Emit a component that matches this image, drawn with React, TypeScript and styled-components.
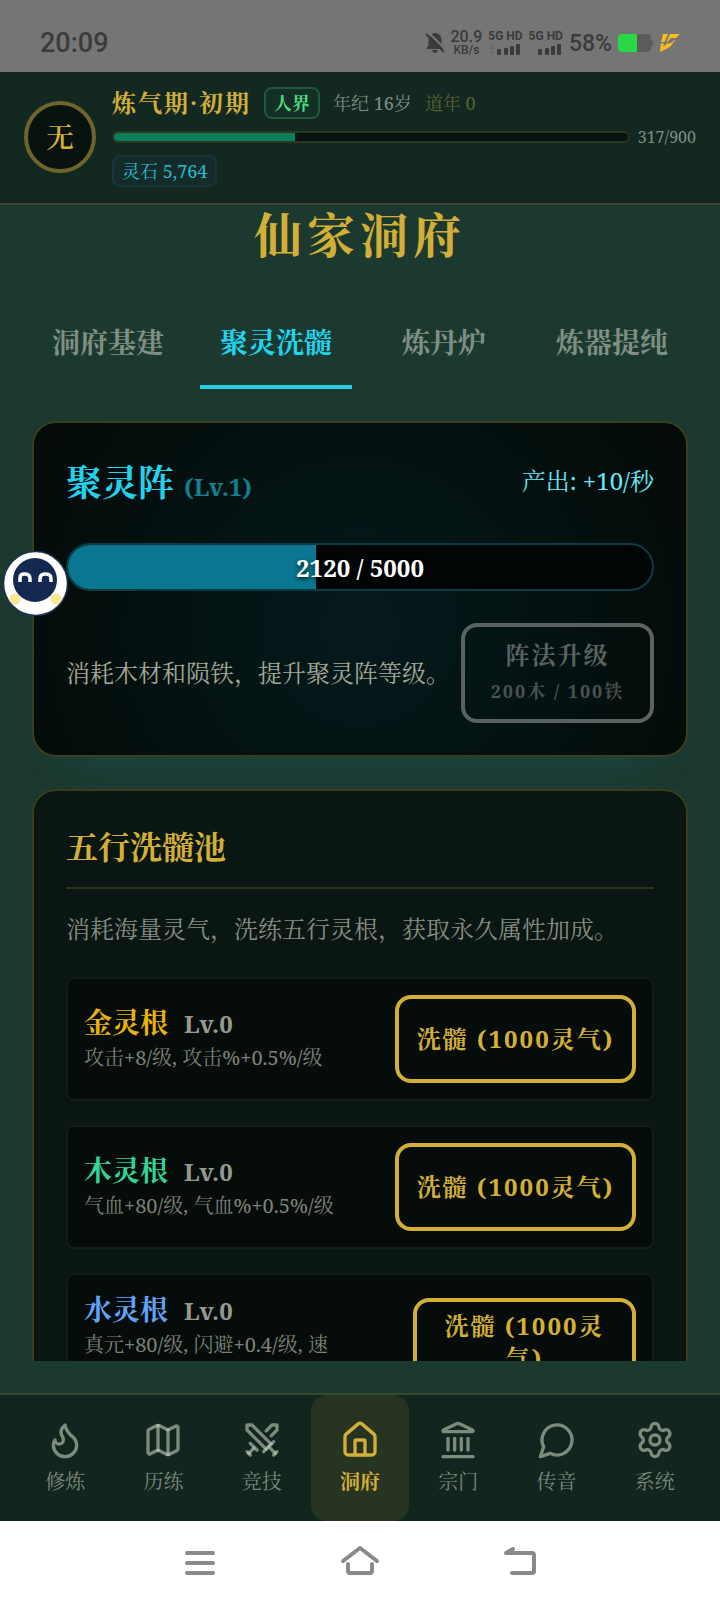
import React from 'react';
import styled, { createGlobalStyle } from 'styled-components';
import { House, Landmark, Map as MapIcon, Settings, Swords } from 'lucide-react';

const GOLD = '#d4af37';
const CYAN = '#22d3ee';
const MUTED = '#7f8f83';

const GlobalStyle = createGlobalStyle`
  * { box-sizing: border-box; }
  body {
    margin: 0;
    background: #1c392f;
    font-family: "Noto Serif", "Liberation Serif", "Noto Serif CJK SC", "Noto Sans CJK SC", serif;
  }
  h1, h2, h3, p { margin: 0; }
  button { font-family: inherit; padding: 0; border: 0; background: none; color: inherit; cursor: pointer; }
`;

const Screen = styled.div`
  display: flex;
  flex-direction: column;
  height: 100vh;
  overflow: hidden;
`;

/* ---------- status bar ---------- */

const StatusBar = styled.div`
  flex: none;
  display: flex;
  align-items: center;
  justify-content: space-between;
  height: 72px;
  padding: 14px 40px 0;
  background: #757575;
  color: #3b3b3b;
  font-family: Roboto, sans-serif;
  font-weight: 500;
`;

const Clock = styled.time`
  font-size: 27px;
`;

const StatusGroup = styled.div`
  display: flex;
  align-items: center;
  gap: 6px;
`;

const NetSpeed = styled.div`
  display: flex;
  flex-direction: column;
  align-items: center;
  font-size: 16px;
  line-height: 14px;
  small { font-size: 12px; line-height: 12px; }
`;

const Signal = styled.div`
  display: flex;
  flex-direction: column;
  align-items: center;
  gap: 2px;
  font-size: 12px;
  font-weight: 700;
  line-height: 11px;
  svg { display: block; }
`;

const Percent = styled.span`
  font-size: 23px;
`;

/* ---------- header ---------- */

const Header = styled.header`
  flex: none;
  display: flex;
  align-items: center;
  gap: 16px;
  padding: 15px 24px 16px;
  background: #132821;
  border-bottom: 2px solid #3b4729;
`;

const Avatar = styled.div`
  flex: none;
  display: grid;
  place-items: center;
  width: 72px;
  height: 72px;
  border: 4px solid #6f642b;
  border-radius: 50%;
  background: #08130f;
  color: ${GOLD};
  font-size: 28px;
  font-weight: 600;
  line-height: 40px;
`;

const Profile = styled.div`
  flex: 1;
  min-width: 0;
  display: flex;
  flex-direction: column;
  align-items: flex-start;
  gap: 8px;
`;

const ProfileRow = styled.div<{ $gap: number; $height: number }>`
  display: flex;
  align-items: center;
  align-self: stretch;
  gap: ${(p) => p.$gap}px;
  height: ${(p) => p.$height}px;
`;

const Realm = styled.h2`
  color: ${GOLD};
  font-size: 24px;
  font-weight: 700;
  letter-spacing: 2px;
  line-height: 32px;
`;

const Tag = styled.span<{ $color: string; $edge: string; $fill: string; $bold?: boolean }>`
  padding: 0 8px;
  border: 2px solid ${(p) => p.$edge};
  border-radius: 8px;
  background: ${(p) => p.$fill};
  color: ${(p) => p.$color};
  font-size: 18px;
  font-weight: ${(p) => (p.$bold ? 700 : 400)};
  line-height: 28px;
`;

const Meta = styled.span<{ $color: string; $small?: boolean }>`
  color: ${(p) => p.$color};
  font-size: ${(p) => (p.$small ? 16 : 18)}px;
  line-height: 28px;
`;

const ExpTrack = styled.div`
  flex: 1;
  height: 12px;
  border: 2px solid #2a3722;
  border-radius: 6px;
  background: #08130f;
  overflow: hidden;
`;

const ExpFill = styled.div`
  height: 100%;
  background: #0a7f59;
`;

/* ---------- page ---------- */

const Content = styled.main`
  flex: 1;
  min-height: 0;
  overflow: hidden;
  margin-bottom: 32px;
  padding: 0 32px;
`;

const Title = styled.h1`
  color: ${GOLD};
  font-size: 48px;
  font-weight: 700;
  letter-spacing: 5px;
  line-height: 60px;
  text-align: center;
`;

const Tabs = styled.div`
  display: grid;
  grid-template-columns: repeat(4, 1fr);
  gap: 16px;
  margin-top: 32px;
  margin-bottom: 32px;
`;

const Tab = styled.button<{ $active?: boolean }>`
  height: 92px;
  border-bottom: 4px solid ${(p) => (p.$active ? '#25cfe4' : 'transparent')};
  color: ${(p) => (p.$active ? CYAN : MUTED)};
  font-size: 28px;
  font-weight: 700;
`;

const Card = styled.section<{ $glow?: boolean }>`
  display: flex;
  flex-direction: column;
  padding: 32px;
  border: 2px solid #3b3d21;
  border-radius: 24px;
  background: ${(p) =>
    p.$glow ? 'radial-gradient(circle at 50% 62%, #05191d 0%, #041211 50%, #040a08 100%)' : '#0a1611'};
  box-shadow: ${(p) => (p.$glow ? '0 40px 48px -40px rgba(20, 140, 150, 0.24)' : 'none')};
  & + & { margin-top: 32px; }
`;

const CardHead = styled.div`
  display: flex;
  align-items: flex-start;
  justify-content: space-between;
  height: 56px;
`;

const ArrayName = styled.h2`
  color: ${CYAN};
  font-size: 36px;
  font-weight: 700;
  line-height: 56px;
`;

const ArrayLevel = styled.span`
  margin-left: 10px;
  color: #137f8f;
  font-size: 24px;
`;

const Output = styled.span`
  color: #67e8f9;
  font-size: 24px;
  line-height: 52px;
`;

const SpiritTrack = styled.div`
  display: grid;
  height: 48px;
  margin: 32px 0;
  border: 2px solid #0d3b43;
  border-radius: 24px;
  background: #010505;
  overflow: hidden;
  > * { grid-area: 1 / 1; }
`;

const SpiritFill = styled.div`
  background: #0a7691;
`;

const SpiritValue = styled.span`
  place-self: center;
  color: #fff;
  font-size: 24px;
  font-weight: 700;
  text-shadow: 0 2px 4px rgba(0, 0, 0, 0.8);
`;

const UpgradeRow = styled.div`
  display: flex;
  align-items: center;
  justify-content: space-between;
`;

const Note = styled.p<{ $color: string }>`
  color: ${(p) => p.$color};
  font-size: 24px;
  line-height: 48px;
  white-space: nowrap;
`;

const OutlineButton = styled.button<{ $width: number }>`
  flex: none;
  width: ${(p) => p.$width}px;
  min-height: 88px;
  padding: 8px 12px;
  border: 4px solid ${GOLD};
  border-radius: 16px;
  color: ${GOLD};
  font-size: 24px;
  font-weight: 700;
  letter-spacing: 2px;
  line-height: 32px;
  &:disabled { border-color: #5b6262; color: #5b6262; cursor: default; }
`;

const UpgradeButton = styled(OutlineButton)`
  padding: 10px 0;
  line-height: 36px;
  small { display: block; color: #4a5151; font-size: 18px; }
`;

const PoolTitle = styled.h2`
  padding-bottom: 16px;
  border-bottom: 2px solid #2b3320;
  color: ${GOLD};
  font-size: 32px;
  font-weight: 700;
  line-height: 48px;
`;

const PoolNote = styled(Note)`
  margin: 16px 0 24px;
`;

const RootList = styled.div`
  display: flex;
  flex-direction: column;
  gap: 24px;
`;

const RootRow = styled.div`
  display: flex;
  align-items: center;
  justify-content: space-between;
  padding: 16px;
  border: 2px solid #141d14;
  border-radius: 8px;
  background: #050c09;
`;

const RootName = styled.h3<{ $color: string }>`
  display: flex;
  align-items: baseline;
  gap: 16px;
  color: ${(p) => p.$color};
  font-size: 28px;
  font-weight: 700;
  line-height: 36px;
  span { color: #95998f; font-size: 24px; }
`;

const RootEffect = styled.p`
  color: #7d827c;
  font-size: 20px;
  line-height: 32px;
  white-space: pre-line;
`;

/* ---------- bottom navigation ---------- */

const BottomNav = styled.nav`
  flex: none;
  display: grid;
  grid-template-columns: repeat(7, 1fr);
  padding: 0 16px;
  border-top: 2px solid #3b4729;
  background: #12261f;
`;

const NavItem = styled.button<{ $active?: boolean }>`
  display: flex;
  flex-direction: column;
  align-items: center;
  justify-content: center;
  gap: 8px;
  height: 126px;
  border-radius: 16px;
  background: ${(p) => (p.$active ? '#273422' : 'transparent')};
  color: ${(p) => (p.$active ? GOLD : 'rgba(214, 222, 202, 0.55)')};
  font-size: 20px;
  font-weight: ${(p) => (p.$active ? 700 : 400)};
  line-height: 28px;
`;

const SystemNav = styled.div`
  flex: none;
  display: flex;
  justify-content: center;
  gap: 120px;
  height: 84px;
  background: #fff;
  button { width: 40px; }
  svg { display: block; }
`;

const Assistant = styled.button`
  position: fixed;
  left: 2px;
  top: 550px;
  svg { display: block; }
`;

/* ---------- drawings ---------- */

const stroke = {
  fill: 'none',
  stroke: 'currentColor',
  strokeWidth: 2,
  strokeLinecap: 'round' as const,
  strokeLinejoin: 'round' as const,
};

const FlameIcon = () => (
  <svg width="40" height="40" viewBox="0 0 24 24" {...stroke}>
    <path d="M8.5 14.5A2.5 2.5 0 0 0 11 12c0-1.38-.5-2-1-3-1.072-2.143-.224-4.054 2-6 .5 2.5 2 4.9 4 6.5 2 1.6 3 3.5 3 5.5a7 7 0 1 1-14 0c0-1.153.433-2.294 1-3a2.5 2.5 0 0 0 2.5 2.5z" />
  </svg>
);

const ChatIcon = () => (
  <svg width="40" height="40" viewBox="0 0 24 24" {...stroke}>
    <path d="M7.9 20A9 9 0 1 0 4 16.1L2 22Z" />
  </svg>
);

const MutedBell = () => (
  <svg width="20" height="22" viewBox="0 0 20 22">
    <path d="M10 1c4 0 6.5 3 6.5 7v5.5l2 2.5v1h-17v-1l2-2.5V8C3.5 4 6 1 10 1z" fill="#3b3b3b" />
    <path d="M7 18h6c-.5 2-1.6 3-3 3s-2.500-1-3-3z" fill="#3b3b3b" />
    <path d="M3 0l18 18" stroke="#757575" strokeWidth="2" />
    <path d="M1 2l18 18" stroke="#3b3b3b" strokeWidth="2" />
  </svg>
);

const SignalBars = ({ dotted }: { dotted?: boolean }) => (
  <svg width="32" height="11" viewBox="0 0 32 11" fill="#3b3b3b">
    {dotted && <path d="M1 5l2.500-3L6 5zM1 7l2.500 3L6 7z" fill="#686868" />}
    <rect x="8" y="5" width="4" height="6" rx="1" />
    <rect x="15" y="4" width="4" height="7" rx="1" />
    <rect x="21" y="2" width="4" height="9" rx="1" />
    <rect x="27" y="0" width="4" height="11" rx="1" />
  </svg>
);

const Battery = () => (
  <svg width="36" height="18" viewBox="0 0 36 18">
    <path d="M19 0h10a4 4 0 0 1 4 4v1l2 2v4l-2 2v1a4 4 0 0 1-4 4H19z" fill="#5c5c5c" />
    <path d="M4 0h15v18H4a4 4 0 0 1-4-4V4a4 4 0 0 1 4-4z" fill="#2ad845" />
  </svg>
);

const Bolt = () => (
  <svg width="20" height="18" viewBox="0 0 20 18" fill="#f7bd1c">
    <path d="M3 0h5L4.500 8H1zM10 0h10l-4 4H11L6 9zM1 9.500h3L3 13l4-3.500 4-.5 3-3h1L10 13 0 18z" />
  </svg>
);

const Mascot = () => (
  <svg width="67" height="67" viewBox="0 0 67 67">
    <circle cx="33.5" cy="33.5" r="32" fill="#fff" stroke="#1b3350" strokeWidth="1.5" />
    <circle cx="33" cy="30" r="22" fill="#13294f" />
    <circle cx="13" cy="49" r="5.5" fill="#fbe694" />
    <circle cx="54" cy="49" r="5.5" fill="#fbe694" />
    <g fill="none" stroke="#fff" strokeWidth="3.5">
      <path d="M18 32v-4q0-4 4-4h1q5 0 5 5v3" />
      <path d="M38 32v-3q0-5 5-5h1q5 0 5 5v3" />
    </g>
  </svg>
);

const sysStroke = { ...stroke, stroke: '#8a8a8a', strokeWidth: 4 };

const roots = [
  { name: '金灵根', color: '#eab308', effect: '攻击+8/级, 攻击%+0.5%/级', width: 241 },
  { name: '木灵根', color: '#34d399', effect: '气血+80/级, 气血%+0.5%/级', width: 241 },
  { name: '水灵根', color: '#60a5fa', effect: '真元+80/级, 闪避+0.4/级, 速\n度+0.2/级', width: 223 },
];

const navItems = [
  { label: '修炼', icon: <FlameIcon /> },
  { label: '历练', icon: <MapIcon size={40} /> },
  { label: '竞技', icon: <Swords size={40} /> },
  { label: '洞府', icon: <House size={40} />, active: true },
  { label: '宗门', icon: <Landmark size={40} /> },
  { label: '传音', icon: <ChatIcon /> },
  { label: '系统', icon: <Settings size={40} /> },
];

const tabs = ['洞府基建', '聚灵洗髓', '炼丹炉', '炼器提纯'];

export default function App() {
  const spirit = 2120;
  const capacity = 5000;
  return (
    <Screen lang="zh-CN">
      <GlobalStyle />
      <StatusBar>
        <Clock>20:09</Clock>
        <StatusGroup>
          <MutedBell />
          <NetSpeed>
            <span>20.9</span>
            <small>KB/s</small>
          </NetSpeed>
          <Signal>
            <span>5G HD</span>
            <SignalBars dotted />
          </Signal>
          <Signal>
            <span>5G HD</span>
            <SignalBars />
          </Signal>
          <Percent>58%</Percent>
          <Battery />
          <Bolt />
        </StatusGroup>
      </StatusBar>

      <Header>
        <Avatar>无</Avatar>
        <Profile>
          <ProfileRow $gap={13} $height={32}>
            <Realm>炼气期·初期</Realm>
            <Tag $color="#4ade80" $edge="#1f5a3c" $fill="#142f25" $bold>人界</Tag>
            <Meta $color={MUTED}>年纪 16岁</Meta>
            <Meta $color="#5c6130">道年 0</Meta>
          </ProfileRow>
          <ProfileRow $gap={8} $height={20}>
            <ExpTrack>
              <ExpFill style={{ width: `${(317 / 900) * 100}%` }} />
            </ExpTrack>
            <Meta $color={MUTED} $small>317/900</Meta>
          </ProfileRow>
          <Tag $color="#2fb9cc" $edge="#16363a" $fill="#132c2a">灵石 5,764</Tag>
        </Profile>
      </Header>

      <Content>
        <Title>仙家洞府</Title>
        <Tabs role="tablist">
          {tabs.map((t, i) => (
            <Tab key={t} role="tab" aria-selected={i === 1} $active={i === 1}>
              {t}
            </Tab>
          ))}
        </Tabs>

        <Card $glow>
          <CardHead>
            <ArrayName>
              聚灵阵<ArrayLevel>(Lv.1)</ArrayLevel>
            </ArrayName>
            <Output>产出: +10/秒</Output>
          </CardHead>
          <SpiritTrack>
            <SpiritFill style={{ width: `${(spirit / capacity) * 100}%` }} />
            <SpiritValue>
              {spirit} / {capacity}
            </SpiritValue>
          </SpiritTrack>
          <UpgradeRow>
            <Note $color="#a5a896">消耗木材和陨铁，提升聚灵阵等级。</Note>
            <UpgradeButton $width={193} disabled>
              阵法升级
              <small>200木 / 100铁</small>
            </UpgradeButton>
          </UpgradeRow>
        </Card>

        <Card>
          <PoolTitle>五行洗髓池</PoolTitle>
          <PoolNote $color="#868d84">消耗海量灵气，洗练五行灵根，获取永久属性加成。</PoolNote>
          <RootList>
            {roots.map((r) => (
              <RootRow key={r.name}>
                <div>
                  <RootName $color={r.color}>
                    {r.name}
                    <span>Lv.0</span>
                  </RootName>
                  <RootEffect>{r.effect}</RootEffect>
                </div>
                <OutlineButton $width={r.width}>洗髓 (1000灵气)</OutlineButton>
              </RootRow>
            ))}
          </RootList>
        </Card>
      </Content>

      <BottomNav>
        {navItems.map((n) => (
          <NavItem key={n.label} $active={n.active}>
            {n.icon}
            {n.label}
          </NavItem>
        ))}
      </BottomNav>

      <SystemNav>
        <button aria-label="最近任务">
          <svg width="40" height="84" viewBox="0 0 40 84" {...sysStroke}>
            <path d="M7 32h26M7 42h26M7 52h26" />
          </svg>
        </button>
        <button aria-label="主页">
          <svg width="40" height="84" viewBox="0 0 40 84" {...sysStroke}>
            <path d="M3 40L20 27l17 13M8 43v7q0 2 2 2h20q2 0 2-2v-7" />
          </svg>
        </button>
        <button aria-label="返回">
          <svg width="40" height="84" viewBox="0 0 40 84" {...sysStroke}>
            <path d="M13 28L6 32h26q2 0 2 2v16q0 2-2 2H12" />
          </svg>
        </button>
      </SystemNav>

      <Assistant aria-label="助手">
        <Mascot />
      </Assistant>
    </Screen>
  );
}
